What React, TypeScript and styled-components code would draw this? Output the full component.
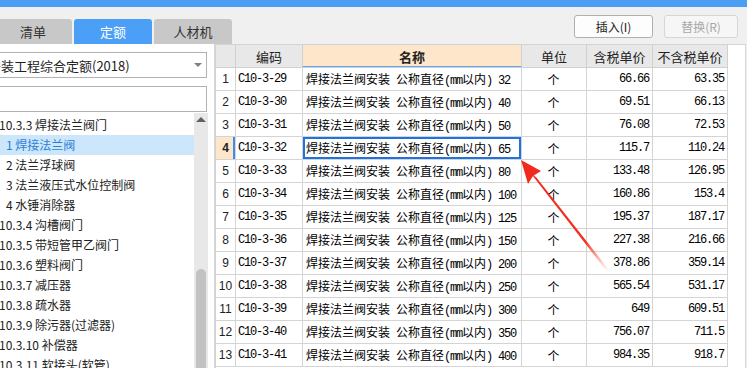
import React from 'react';
import styled, { createGlobalStyle, css } from 'styled-components';

const GlobalStyle = createGlobalStyle`
  html, body {
    margin: 0;
    padding: 0;
    background: #f0f0f0;
  }
  body {
    font-family: 'Noto Sans CJK SC', 'Noto Sans', sans-serif;
    font-size: 12px;
    color: #222;
  }
`;

const Page = styled.div`
  width: 747px;
  height: 368px;
  overflow: hidden;
  position: relative;
  display: flex;
  flex-direction: column;
  background: #f0f0f0;
`;

const TopBar = styled.div`
  height: 7px;
  background: #4a9ef5;
  flex: none;
`;

const HeaderRow = styled.div`
  height: 37px;
  flex: none;
  display: flex;
`;

const TabBar = styled.div`
  display: flex;
  align-items: flex-end;
  gap: 2px;
  margin-left: -6px;
`;

const Tab = styled.div<{ $active?: boolean }>`
  width: 78px;
  height: 25px;
  border-radius: 3px 3px 0 0;
  display: flex;
  align-items: center;
  justify-content: center;
  font-size: 13px;
  background: ${(p) => (p.$active ? '#4c9ff6' : '#c8c8c8')};
  color: ${(p) => (p.$active ? '#fff' : '#333')};
`;

const Toolbar = styled.div`
  margin-left: auto;
  display: flex;
  align-items: flex-start;
  gap: 11px;
  padding-top: 8px;
  padding-right: 9px;
`;

const ToolButton = styled.div<{ $disabled?: boolean; $w: number }>`
  width: ${(p) => p.$w}px;
  height: 23px;
  box-sizing: border-box;
  border-radius: 3px;
  display: flex;
  align-items: center;
  justify-content: center;
  font-size: 12px;
  ${(p) =>
    p.$disabled
      ? css`
          border: 1px solid #d6d6d6;
          background: #f6f6f6;
          color: #a8a8a8;
        `
      : css`
          border: 1px solid #b0b0b0;
          background: #fdfdfd;
          color: #222;
        `}
`;

const MainRow = styled.div`
  flex: 1;
  min-height: 0;
  display: flex;
  padding-right: 1px;
`;

const LeftPanel = styled.div`
  width: 214px;
  flex: none;
  background: #fff;
  overflow: hidden;
`;

const LeftInner = styled.div`
  margin-left: -20px;
  width: 228px;
  height: 100%;
  padding-top: 8px;
  box-sizing: border-box;
  display: flex;
  flex-direction: column;
`;

const Field = styled.div`
  height: 26px;
  margin-right: 1px;
  box-sizing: border-box;
  border: 1px solid #b2b2b2;
  background: #fff;
  display: flex;
  align-items: center;
  padding-left: 7px;
  font-size: 13px;
  color: #222;
  & + & {
    margin-top: 8px;
  }
`;

const FieldText = styled.span`
  flex: 1;
  white-space: nowrap;
`;

const Caret = styled.span`
  width: 0;
  height: 0;
  border-left: 4px solid transparent;
  border-right: 4px solid transparent;
  border-top: 4px solid #808080;
  margin-right: 4px;
`;

const TreeArea = styled.div`
  flex: 1;
  min-height: 0;
  margin-top: 1px;
  display: flex;
`;

const TreeList = styled.div`
  flex: 1;
  padding-top: 2px;
  overflow: hidden;
`;

const TreeRow = styled.div<{ $child?: boolean; $selected?: boolean }>`
  height: 20px;
  line-height: 20px;
  white-space: nowrap;
  font-size: 12px;
  padding-left: ${(p) => (p.$child ? 26 : 19)}px;
  background: ${(p) => (p.$selected ? '#cce6fb' : 'transparent')};
  color: ${(p) => (p.$selected ? '#2d7fd6' : '#222')};
`;

const ScrollTrack = styled.div`
  width: 14px;
  flex: none;
  background: #e8e8e8;
  display: flex;
  flex-direction: column;
  align-items: center;
  overflow: hidden;
`;

const UpArrow = styled.div`
  width: 0;
  height: 0;
  margin-top: 4px;
  border-left: 5px solid transparent;
  border-right: 5px solid transparent;
  border-bottom: 5px solid #606060;
`;

const Thumb = styled.div`
  width: 10px;
  height: 200px;
  margin-top: 147px;
  border-radius: 5px;
  background: #c2c2c2;
  flex: none;
`;

const TablePane = styled.div`
  flex: 1;
  background: #fff;
  border-top: 1px solid #d4d4d4;
  border-left: 2px solid #d4d4d4;
  border-right: 1px solid #d8d8d8;
  overflow: hidden;
`;

const Grid = styled.table`
  width: 512px;
  table-layout: fixed;
  border-collapse: separate;
  border-spacing: 0;
`;

const HeadCell = styled.th<{ $accent?: boolean }>`
  height: 23px;
  box-sizing: border-box;
  padding: 0;
  font-size: 13px;
  font-weight: ${(p) => (p.$accent ? 700 : 400)};
  color: #222;
  background: ${(p) => (p.$accent ? '#fde6c9' : '#e8e8e8')};
  border-right: 1px solid #d0d0d0;
  border-bottom: 1px solid #d0d0d0;
  box-shadow: ${(p) => (p.$accent ? 'inset 0 -1px 0 #5ea6f3' : 'none')};
  text-align: center;
`;

const monoText = css`
  font-family: 'Liberation Mono', monospace;
  font-size: 12px;
  letter-spacing: -1.2px;
`;

const Cell = styled.td<{
  $align?: 'left' | 'center' | 'right';
  $mono?: boolean;
  $focus?: boolean;
}>`
  height: 23px;
  box-sizing: border-box;
  padding: 0 3px 0 2px;
  border-right: 1px solid #d4d4d4;
  border-bottom: 1px solid #d4d4d4;
  white-space: nowrap;
  overflow: hidden;
  color: #000;
  font-size: 12px;
  text-align: ${(p) => p.$align || 'left'};
  ${(p) => p.$mono && monoText}
  ${(p) =>
    p.$focus &&
    css`
      box-shadow: inset 0 0 0 2px #1f73e0;
    `}
`;

const NumCell = styled.td<{ $current?: boolean }>`
  height: 23px;
  box-sizing: border-box;
  padding: 0;
  text-align: center;
  font-family: 'Liberation Sans', sans-serif;
  font-size: 12px;
  color: #222;
  border-right: 1px solid #d4d4d4;
  border-bottom: 1px solid #d4d4d4;
  ${(p) =>
    p.$current &&
    css`
      background: #fde6c9;
      font-weight: 700;
      box-shadow: inset -2px 0 0 #3d8eea;
    `}
`;

const NameText = styled.span`
  padding-left: 1px;
`;

const Ascii = styled.span`
  ${monoText}
  white-space: pre;
`;

const Overlay = styled.svg`
  position: absolute;
  left: 0;
  top: 0;
  pointer-events: none;
`;

const treeItems = [
  { label: '10.3.3 焊接法兰阀门' },
  { label: '1 焊接法兰阀', child: true, selected: true },
  { label: '2 法兰浮球阀', child: true },
  { label: '3 法兰液压式水位控制阀', child: true },
  { label: '4 水锤消除器', child: true },
  { label: '10.3.4 沟槽阀门' },
  { label: '10.3.5 带短管甲乙阀门' },
  { label: '10.3.6 塑料阀门' },
  { label: '10.3.7 减压器' },
  { label: '10.3.8 疏水器' },
  { label: '10.3.9 除污器(过滤器)' },
  { label: '10.3.10 补偿器' },
  { label: '10.3.11 软接头(软管)' },
];

const rows = [
  ['C10-3-29', '32', '66.66', '63.35'],
  ['C10-3-30', '40', '69.51', '66.13'],
  ['C10-3-31', '50', '76.08', '72.53'],
  ['C10-3-32', '65', '115.7', '110.24'],
  ['C10-3-33', '80', '133.48', '126.95'],
  ['C10-3-34', '100', '160.86', '153.4'],
  ['C10-3-35', '125', '195.37', '187.17'],
  ['C10-3-36', '150', '227.38', '216.66'],
  ['C10-3-37', '200', '378.86', '359.14'],
  ['C10-3-38', '250', '565.54', '531.17'],
  ['C10-3-39', '300', '649', '609.51'],
  ['C10-3-40', '350', '756.07', '711.5'],
  ['C10-3-41', '400', '984.35', '918.7'],
];

// split mixed text so ASCII runs get the narrow half-width font
function mixed(text: string) {
  return text
    .split(/([\x00-\x7f]+)/)
    .filter(Boolean)
    .map((part, i) =>
      /^[\x00-\x7f]+$/.test(part) ? <Ascii key={i}>{part}</Ascii> : <span key={i}>{part}</span>
    );
}

function Arrow() {
  return (
    <Overlay width={747} height={368} viewBox='0 0 747 368'>
      <defs>
        <linearGradient id='tail' gradientUnits='userSpaceOnUse' x1='532' y1='175' x2='609' y2='271'>
          <stop offset='0' stopColor='#f02a1c' />
          <stop offset='0.7' stopColor='#f3321f' />
          <stop offset='1' stopColor='#f77' stopOpacity='0' />
        </linearGradient>
      </defs>
      <polygon points='529.8,172.0 536.6,177.8 610,271 606.5,271' fill='url(#tail)' />
      <polygon points='521,160 541,171 533,176 528,184' fill='#f02a1c' />
    </Overlay>
  );
}

export default function App() {
  return (
    <Page>
      <GlobalStyle />
      <TopBar />
      <HeaderRow>
        <TabBar>
          <Tab>清单</Tab>
          <Tab $active>定额</Tab>
          <Tab>人材机</Tab>
        </TabBar>
        <Toolbar>
          <ToolButton $w={79}>插入(I)</ToolButton>
          <ToolButton $w={74} $disabled>
            替换(R)
          </ToolButton>
        </Toolbar>
      </HeaderRow>
      <MainRow>
        <LeftPanel>
          <LeftInner>
            <Field>
              <FieldText>安装工程综合定额(2018)</FieldText>
              <Caret />
            </Field>
            <Field />
            <TreeArea>
              <TreeList>
                {treeItems.map((item) => (
                  <TreeRow key={item.label} $child={item.child} $selected={item.selected}>
                    {item.label}
                  </TreeRow>
                ))}
              </TreeList>
              <ScrollTrack>
                <UpArrow />
                <Thumb />
              </ScrollTrack>
            </TreeArea>
          </LeftInner>
        </LeftPanel>
        <TablePane>
          <Grid>
            <colgroup>
              <col style={{ width: 20 }} />
              <col style={{ width: 67 }} />
              <col style={{ width: 219 }} />
              <col style={{ width: 65 }} />
              <col style={{ width: 66 }} />
              <col style={{ width: 75 }} />
            </colgroup>
            <thead>
              <tr>
                <HeadCell />
                <HeadCell>编码</HeadCell>
                <HeadCell $accent>名称</HeadCell>
                <HeadCell>单位</HeadCell>
                <HeadCell>含税单价</HeadCell>
                <HeadCell>不含税单价</HeadCell>
              </tr>
            </thead>
            <tbody>
              {rows.map(([code, size, taxed, net], i) => {
                const current = i === 3;
                return (
                  <tr key={code}>
                    <NumCell $current={current}>{i + 1}</NumCell>
                    <Cell $mono>{code}</Cell>
                    <Cell $focus={current}>
                      <NameText>{mixed(`焊接法兰阀安装 公称直径(mm以内) ${size}`)}</NameText>
                    </Cell>
                    <Cell $align='center'>个</Cell>
                    <Cell $align='right' $mono>
                      {taxed}
                    </Cell>
                    <Cell $align='right' $mono>
                      {net}
                    </Cell>
                  </tr>
                );
              })}
            </tbody>
          </Grid>
        </TablePane>
      </MainRow>
      <Arrow />
    </Page>
  );
}
